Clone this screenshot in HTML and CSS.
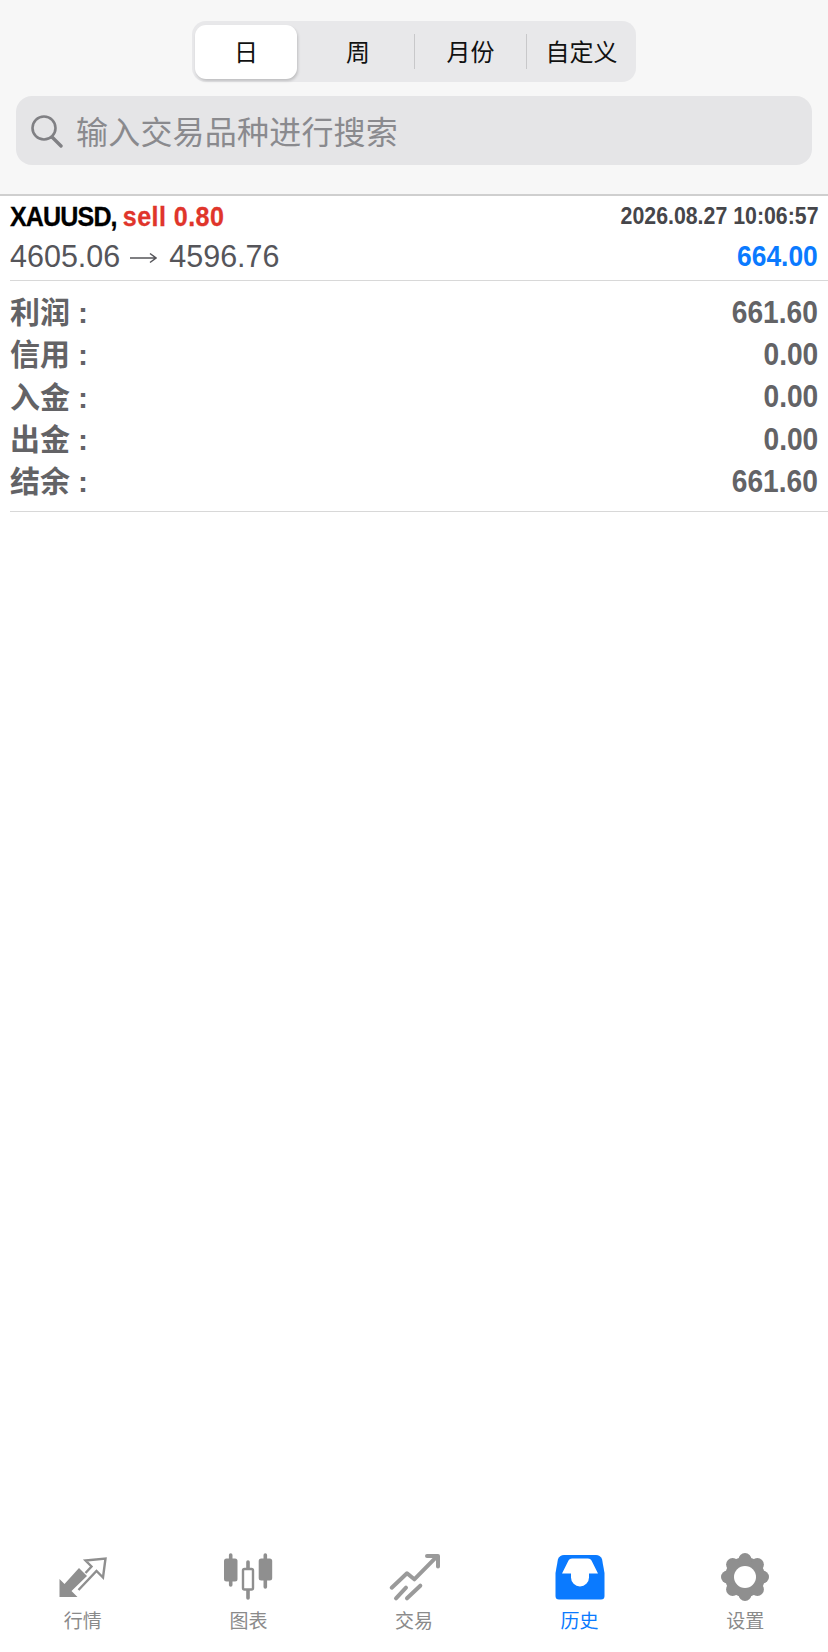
FILE: index.html
```html
<!DOCTYPE html>
<html lang="zh-CN">
<head>
    <meta charset="UTF-8">
    <meta name="viewport" content="width=device-width, initial-scale=1.0">
    <title>历史</title>
    <link rel="stylesheet" href="styles.css">
</head>
<body>
    <div class="top">
        <div class="segment">
            <div class="seg-item active">日</div>
            <div class="seg-item">周</div>
            <div class="seg-item split">月份</div>
            <div class="seg-item split">自定义</div>
        </div>
        <div class="search">
            <svg class="search-icon" width="34" height="34" viewBox="0 0 34 34">
                <circle cx="15" cy="14" r="11.5" fill="none" stroke="#808084" stroke-width="2.6"/>
                <path d="M23 23 L32 32" stroke="#808084" stroke-width="3.4" stroke-linecap="round"/>
            </svg>
            <span>输入交易品种进行搜索</span>
        </div>
    </div>

    <div class="list">
        <div class="deal">
            <div class="deal-line">
                <div class="deal-name">XAUUSD, <span class="sell">sell 0.80</span></div>
                <div class="deal-time">2026.08.27 10:06:57</div>
            </div>
            <div class="deal-line">
                <div class="deal-price">4605.06<svg class="arrow" width="27" height="14" viewBox="0 0 27 14"><path d="M0 7 H26 M20 2.5 L26 7 L20 11.5" fill="none" stroke="#55555a" stroke-width="1.5"/></svg>4596.76</div>
                <div class="deal-profit">664.00</div>
            </div>
        </div>
        <div class="summary">
            <div class="sum-row"><span class="sum-label">利润<i>:</i></span><span class="sum-value">661.60</span></div>
            <div class="sum-row"><span class="sum-label">信用<i>:</i></span><span class="sum-value">0.00</span></div>
            <div class="sum-row"><span class="sum-label">入金<i>:</i></span><span class="sum-value">0.00</span></div>
            <div class="sum-row"><span class="sum-label">出金<i>:</i></span><span class="sum-value">0.00</span></div>
            <div class="sum-row"><span class="sum-label">结余<i>:</i></span><span class="sum-value">661.60</span></div>
        </div>
    </div>

    <div class="tabs">
        <div class="tab">
            <svg width="60" height="50" viewBox="0 0 60 50">
                <path d="M6.5 27 V45 H24.5 L18.5 39 L34 24 L26 16 L11.5 32 Z" fill="#8f8f8f"/>
                <path d="M25.5 38 L43.5 19 L50 25.5 L52.5 6.5 L32.5 8.5 L38.5 14.5 L32.5 21" fill="none" stroke="#8f8f8f" stroke-width="2.4"/>
            </svg>
            <span>行情</span>
        </div>
        <div class="tab">
            <svg width="60" height="50" viewBox="0 0 60 50">
                <g stroke="#8f8f8f" stroke-width="3.6" stroke-linecap="round">
                    <path d="M12.7 3 V33"/>
                    <path d="M30 10 V46"/>
                    <path d="M47.3 3 V35"/>
                </g>
                <rect x="6" y="6.5" width="13.5" height="23" rx="2.5" fill="#8f8f8f"/>
                <rect x="25" y="17" width="10" height="20.5" rx="1.5" fill="#fff" stroke="#8f8f8f" stroke-width="2.4"/>
                <rect x="40.7" y="6.5" width="13.5" height="22" rx="2.5" fill="#8f8f8f"/>
            </svg>
            <span>图表</span>
        </div>
        <div class="tab">
            <svg width="60" height="50" viewBox="0 0 60 50">
                <g fill="none" stroke="#9a9a9a" stroke-width="4" stroke-linecap="round" stroke-linejoin="round">
                    <path d="M7.7 35.7 L23 21.3 L30.3 27.3 L52 5.3"/>
                    <path d="M43 4 H54 V14.5"/>
                    <path d="M12 46.3 L22 35.7"/>
                    <path d="M23 46.3 L36.3 33.7"/>
                </g>
            </svg>
            <span>交易</span>
        </div>
        <div class="tab on">
            <svg width="60" height="50" viewBox="0 0 60 50">
                <path d="M14 3 H46 Q50 3 52 7 L54.5 21 V44 Q54.5 47.5 51 47.5 H9 Q5.5 47.5 5.5 44 V21 L8 7 Q10 3 14 3 Z" fill="#0a7aff"/>
                <path d="M12 21.5 L18.5 8.5 Q19.5 6.5 22 6.5 H38 Q40.5 6.5 41.5 8.5 L48 21.5 H39 V25.5 A9 9 0 0 1 21 25.5 V21.5 Z" fill="#fff"/>
            </svg>
            <span>历史</span>
        </div>
        <div class="tab">
            <svg width="60" height="50" viewBox="0 0 60 50">
                <g fill="#8f8f8f">
                    <circle cx="30" cy="25" r="20"/>
                    <circle cx="30" cy="7.5" r="6.5"/>
                    <circle cx="42.4" cy="12.6" r="6.5"/>
                    <circle cx="47.5" cy="25" r="6.5"/>
                    <circle cx="42.4" cy="37.4" r="6.5"/>
                    <circle cx="30" cy="42.5" r="6.5"/>
                    <circle cx="17.6" cy="37.4" r="6.5"/>
                    <circle cx="12.5" cy="25" r="6.5"/>
                    <circle cx="17.6" cy="12.6" r="6.5"/>
                </g>
                <circle cx="30" cy="25" r="11" fill="#fff"/>
            </svg>
            <span>设置</span>
        </div>
    </div>
</body>
</html>
```

FILE: styles.css
```css
body {
    font-family: "Liberation Sans", "Noto Sans CJK SC", sans-serif;
    background-color: #fff;
    margin: 0;
    padding: 0;
    display: flex;
    flex-direction: column;
    height: 100vh;
}
.top {
    height: 173px;
    padding-top: 21px;
    background-color: #f7f7f7;
    border-bottom: 2px solid #cfcfcf;
}
.segment {
    width: 444px;
    height: 61px;
    margin: 0 auto;
    display: grid;
    grid-template-columns: 110px 112px 112px 110px;
    align-items: center;
    background-color: #e8e8ea;
    border-radius: 14px;
}
.seg-item {
    height: 35px;
    line-height: 37px;
    text-align: center;
    font-size: 24px;
    color: #111;
}
.seg-item.split {
    border-left: 1px solid #c8c8ca;
}
.seg-item.active {
    height: 54px;
    line-height: 56px;
    margin: 0 5px 0 3px;
    background-color: #fff;
    border-radius: 11px;
    box-shadow: 1px 2px 3px rgba(0, 0, 0, 0.18);
}
.search {
    margin: 14px 16px 0;
    height: 69px;
    display: flex;
    align-items: center;
    padding-left: 13px;
    background-color: #e5e5e7;
    border-radius: 16px;
    font-size: 32px;
    letter-spacing: 0.2px;
    color: #8a8a8e;
}
.search span {
    margin-top: -2px;
}
.search-icon {
    margin-right: 13px;
    flex: none;
}
.list {
    flex: 1;
    padding-left: 10px;
}
.deal {
    height: 84px;
    padding-right: 10px;
    border-bottom: 1px solid #d8d8d8;
}
.deal-line {
    display: flex;
    justify-content: space-between;
    align-items: center;
    height: 40px;
}
.deal-name {
    font-size: 28.5px;
    font-weight: bold;
    letter-spacing: -1px;
    color: #000;
    -webkit-text-stroke: 0.3px;
    transform: scaleX(0.88);
    transform-origin: left center;
}
.sell {
    letter-spacing: 0.5px;
    color: #e0352b;
}
.deal-time {
    font-size: 24.5px;
    font-weight: bold;
    color: #46464a;
    transform: scaleX(0.87);
    transform-origin: right center;
}
.deal-price {
    font-size: 30.5px;
    color: #55555a;
}
.arrow {
    margin: 0 12px 0 10px;
    vertical-align: 2px;
}
.deal-profit {
    font-size: 30px;
    font-weight: bold;
    color: #0a7aff;
    transform: scaleX(0.88);
    transform-origin: right center;
}
.summary {
    padding: 10px 10px 9px 0;
    border-bottom: 1px solid #d8d8d8;
}
.sum-row {
    display: flex;
    justify-content: space-between;
    align-items: center;
    height: 42.3px;
    font-size: 30px;
    font-weight: bold;
    color: #636366;
}
.sum-label {
    margin-top: -4px;
}
.sum-label i {
    font-style: normal;
    margin-left: 8px;
}
.sum-value {
    font-size: 32px;
    transform: scaleX(0.88);
    transform-origin: right center;
}
.tabs {
    display: grid;
    grid-template-columns: repeat(5, 1fr);
    height: 100px;
    padding-top: 12px;
}
.tab {
    display: flex;
    flex-direction: column;
    align-items: center;
    font-size: 19px;
    line-height: 26px;
    color: #8a8a8a;
}
.tab svg {
    display: block;
    margin-bottom: 7px;
}
.tab.on {
    color: #0a7aff;
}
```
